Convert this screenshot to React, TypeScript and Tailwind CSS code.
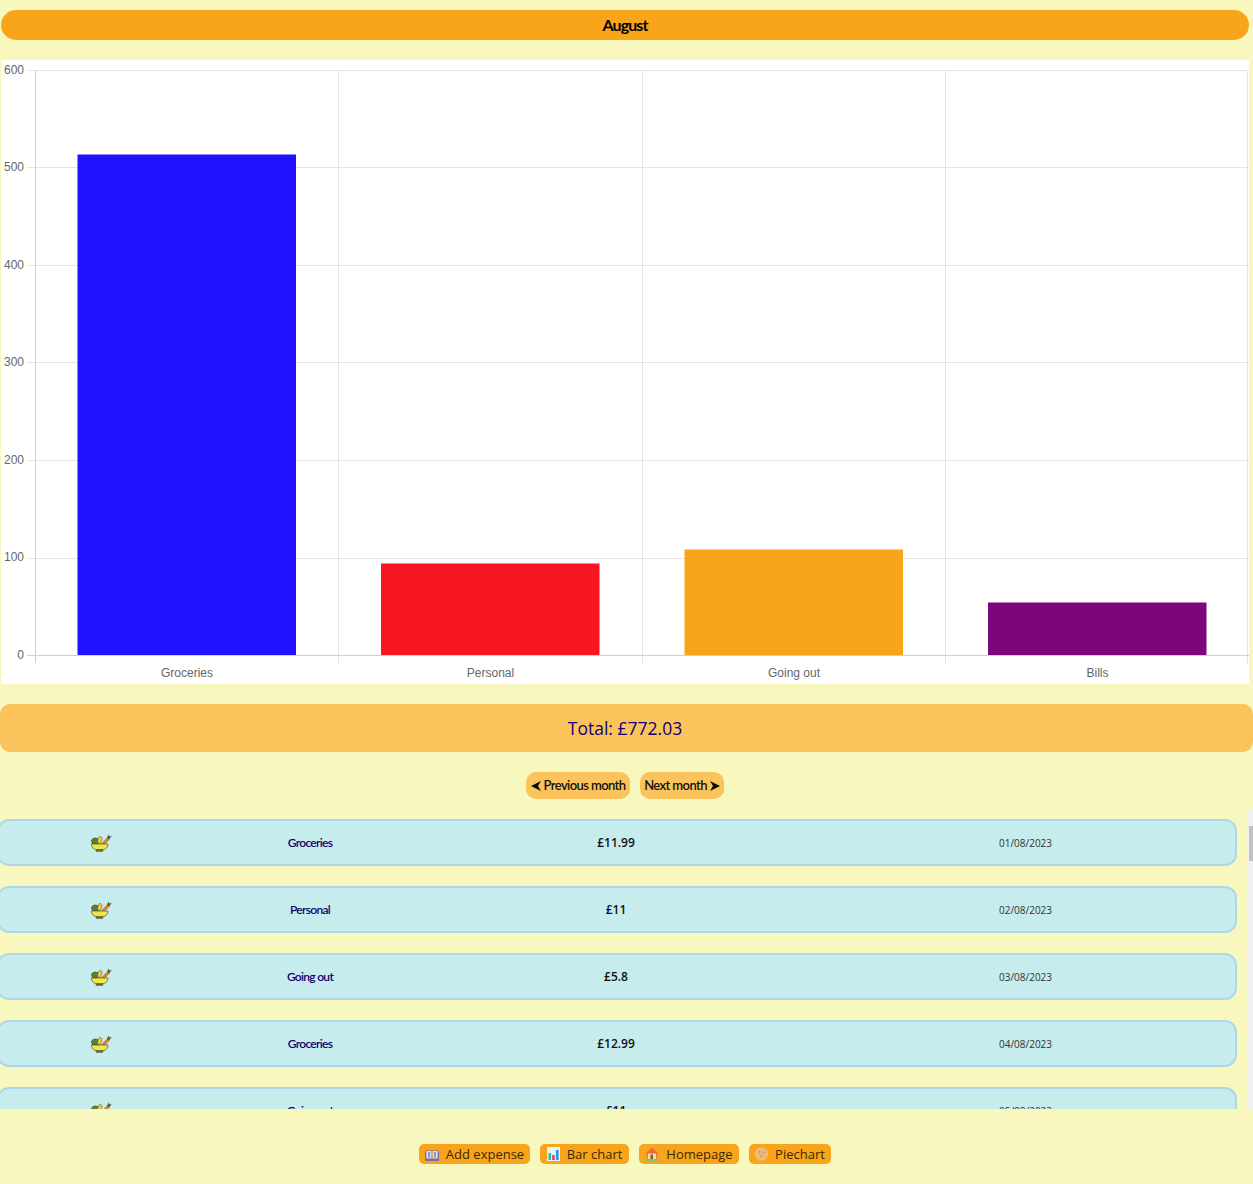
import React from "react"

const dosis = "font-['Lato','Noto_Sans',sans-serif]"
const openSans = "font-['Open_Sans','Noto_Sans',sans-serif]"

const rows = [
  { category: "Groceries", price: "£11.99", date: "01/08/2023" },
  { category: "Personal", price: "£11", date: "02/08/2023" },
  { category: "Going out", price: "£5.8", date: "03/08/2023" },
  { category: "Groceries", price: "£12.99", date: "04/08/2023" },
  { category: "Going out", price: "£11", date: "05/08/2023" },
]

function BarChart() {
  const gridY = [70.5, 167.5, 265.5, 362.5, 460.5, 558.5]
  const gridX = [35.5, 338.5, 642.5, 945.5, 1247.5]
  const yLabels = [
    ["600", 70],
    ["500", 167],
    ["400", 265],
    ["300", 362],
    ["200", 460],
    ["100", 557],
    ["0", 655],
  ] as const
  const bars = [
    { x: 77.5, y: 154.5, h: 501, fill: "#2211ff", label: "Groceries", cx: 186 },
    { x: 381, y: 563.5, h: 92, fill: "#f7161f", label: "Personal", cx: 489.5 },
    { x: 684.5, y: 549.5, h: 106, fill: "#f8a51b", label: "Going out", cx: 793 },
    { x: 988, y: 602.5, h: 53, fill: "#7d067d", label: "Bills", cx: 1096.5 },
  ]
  return (
    <svg width="1248" height="624" viewBox="1 60 1248 624" className="block">
      {gridY.map((y) => (
        <line key={y} x1="27" x2="1249" y1={y} y2={y} stroke="#e3e3e3" />
      ))}
      {gridX.map((x, i) => (
        <line key={x} x1={x} x2={x} y1="70" y2="663" stroke={i === 0 ? "#cfcfcf" : "#e3e3e3"} />
      ))}
      {bars.map((b) => (
        <rect key={b.label} x={b.x} y={b.y} width="218.5" height={b.h} fill={b.fill} />
      ))}
      <line x1="27" x2="1249" y1="655.5" y2="655.5" stroke="#cfcfcf" />
      {yLabels.map(([t, y]) => (
        <text key={t} x="24" y={y + 4} textAnchor="end" fontSize="12" fill="#666" fontFamily="Liberation Sans, sans-serif">
          {t}
        </text>
      ))}
      {bars.map((b) => (
        <text key={b.label} x={b.cx + 1} y="677" textAnchor="middle" fontSize="12" fill="#666" fontFamily="Liberation Sans, sans-serif">
          {b.label}
        </text>
      ))}
    </svg>
  )
}

function SaladIcon() {
  return (
    <svg width="21" height="18" viewBox="0 0 21 18">
      <path d="M0.5 6.5 C2 3.5 5 3.5 8 5.5 L8.5 10 L1.5 10 Z" fill="#5d7f35" stroke="#38431f" strokeWidth="0.7" />
      <ellipse cx="8.8" cy="6" rx="1.9" ry="3.7" fill="#edd53c" stroke="#75661f" strokeWidth="0.6" transform="rotate(15 8.8 6)" />
      <path d="M10.5 10 L16.5 3.5 L18.2 5.2 L14 10 Z" fill="#ee7d30" stroke="#8a4c1e" strokeWidth="0.5" />
      <path d="M16 3.8 L17.5 0.6 L18.5 2.4 L20.8 1.8 L19.6 3.6 L18.2 5.4 Z" fill="#4c6632" />
      <path d="M0.3 10 H17 C17 13 15 15.4 12.5 15.5 H5 C2.5 15.4 0.5 13 0.3 10 Z" fill="#efe44a" stroke="#5f5a28" strokeWidth="0.7" />
      <path d="M4.5 15.5 H12.5 L12 17.8 H5 Z" fill="#6a6734" />
    </svg>
  )
}

function LeftArrow() {
  return (
    <svg width="10" height="10" viewBox="0 0 10 10" className="shrink-0">
      <path d="M0 5 L10 0 L7 5 L10 10 Z" fill="#0a0a0a" />
    </svg>
  )
}

function RightArrow() {
  return (
    <svg width="10" height="10" viewBox="0 0 10 10" className="shrink-0">
      <path d="M10 5 L0 0 L3 5 L0 10 Z" fill="#0a0a0a" />
    </svg>
  )
}

function BookIcon() {
  return (
    <svg width="14" height="11" viewBox="0 0 14 11" className="mt-[2px]">
      <rect x="0" y="0.5" width="14" height="10.5" rx="1" fill="#7a68ad" />
      <rect x="1.3" y="1" width="5" height="7.5" fill="#d9dff0" />
      <rect x="7.7" y="1" width="5" height="7.5" fill="#d9dff0" />
      <rect x="3" y="2" width="2" height="5.5" fill="#8c93c4" />
      <rect x="9" y="2" width="2" height="5.5" fill="#8c93c4" />
      <rect x="6.3" y="0.5" width="1.4" height="8.5" fill="#e8b33a" />
    </svg>
  )
}

function ChartIcon() {
  return (
    <svg width="13" height="14" viewBox="0 0 13 14">
      <rect width="13" height="14" fill="#eef3f6" />
      <rect x="1.5" y="6" width="2.5" height="7" fill="#1fc3a0" />
      <rect x="5.2" y="8" width="2.5" height="5" fill="#ee2a7b" />
      <rect x="8.9" y="3" width="2.8" height="10" fill="#2e9be6" />
    </svg>
  )
}

function HouseIcon() {
  return (
    <svg width="14" height="14" viewBox="0 0 14 14">
      <path d="M7 0.5 L13.8 7 L11.8 7 L11.8 12 L2.2 12 L2.2 7 L0.2 7 Z" fill="#ef6a3a" />
      <rect x="3" y="6.5" width="8" height="5.5" fill="#f5dca8" />
      <rect x="5.5" y="7.5" width="2.5" height="4.5" fill="#8a5a34" />
      <rect x="0.5" y="12" width="13" height="2" fill="#79c96a" />
    </svg>
  )
}

function CookieIcon() {
  return (
    <svg width="13" height="14" viewBox="0 0 13 14">
      <circle cx="6.5" cy="7" r="6.2" fill="#eab877" stroke="#f2cf9a" strokeWidth="0.6" />
      <circle cx="4.5" cy="5" r="0.7" fill="#b9854a" />
      <circle cx="8.5" cy="5.5" r="0.7" fill="#b9854a" />
      <circle cx="6" cy="9" r="0.7" fill="#b9854a" />
    </svg>
  )
}

function NavButton({ icon, label, width }: { icon: React.ReactNode; label: string; width: string }) {
  return (
    <div className={`flex h-5 items-center justify-center gap-[7px] rounded-[5px] bg-[#f8a51b] text-[13px] text-[#3a2a00] ${width}`}>
      {icon}
      <span className="pt-px">{label}</span>
    </div>
  )
}

export default function App() {
  return (
    <div className={`h-[1184px] w-[1253px] overflow-hidden bg-[#f7f7be] pt-[10px] ${dosis}`}>
      <div className="mx-[1px] flex h-[30px] w-[1248px] items-center justify-center rounded-[15px] bg-[#f8a51b] text-base font-bold tracking-[-0.9px] text-black">
        August
      </div>

      <div className="ml-[1px] mt-5 h-[624px] w-[1248px] bg-white">
        <BarChart />
      </div>

      <div className={`mt-5 flex h-12 w-[1253px] items-center justify-center rounded-[10px] bg-[#fac35c] pr-[3px] pt-px text-[17.5px] text-[#14006e] ${openSans}`}>
        Total: £772.03
      </div>

      <div className="mt-5 flex h-[27px] w-[1250px] justify-center gap-[10px] text-[13px] font-semibold tracking-[-0.6px] text-[#111]">
        <div className="flex w-[104px] items-center justify-center gap-[3px] rounded-[10px] bg-[#fac35c]">
          <LeftArrow />
          <span className="pt-px">Previous month</span>
        </div>
        <div className="flex w-[84px] items-center justify-center gap-[3px] rounded-[10px] bg-[#fac35c]">
          <span className="pt-px">Next month</span>
          <RightArrow />
        </div>
      </div>

      <div className="mt-[10px] flex h-[300px]">
        <div className="flex h-full w-[1247px] flex-col gap-[20px] overflow-hidden pt-[10px]">
          {rows.map((r, i) => (
            <div
              key={i}
              className="-ml-[3px] grid h-[47px] w-[1240px] shrink-0 grid-cols-[205px_212px_400px_1fr] items-center rounded-[12px] border-2 border-[#aed8e8] bg-[#c6ecee]"
            >
              <div className="flex justify-center pt-[1px]">
                <SaladIcon />
              </div>
              <div className="text-center text-[12px] font-semibold tracking-[-0.7px] text-[#14006e]">{r.category}</div>
              <div className={`text-center text-xs font-semibold text-[#111] ${openSans}`}>{r.price}</div>
              <div className={`pt-[2px] text-center text-[10px] text-[#333] ${openSans}`}>{r.date}</div>
            </div>
          ))}
        </div>
        <div className="flex h-full w-[6px] flex-col bg-[#f1f1f1] pl-[2px] pt-[17px]">
          <div className="h-[35px] w-full bg-[#c1c1c1]" />
        </div>
      </div>

      <div className={`mt-[35px] flex w-[1250px] justify-center gap-[10px] ${openSans}`}>
        <NavButton icon={<BookIcon />} label="Add expense" width="w-[111px]" />
        <NavButton icon={<ChartIcon />} label="Bar chart" width="w-[89px]" />
        <NavButton icon={<HouseIcon />} label="Homepage" width="w-[100px]" />
        <NavButton icon={<CookieIcon />} label="Piechart" width="w-[82px]" />
      </div>
    </div>
  )
}
